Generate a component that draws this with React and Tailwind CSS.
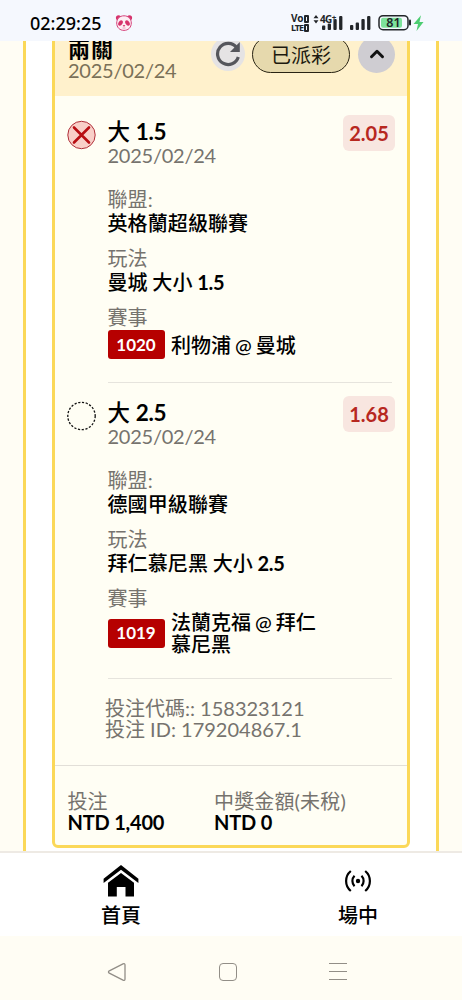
import { ChevronUp } from 'lucide-react';

const BETS = [
    {
        id: '1020',
        pick: '大 1.5',
        date: '2025/02/24',
        odds: '2.05',
        lost: true,
        league: '英格蘭超級聯賽',
        market: '曼城 大小 1.5',
        teams: '利物浦 @ 曼城',
    },
    {
        id: '1019',
        pick: '大 2.5',
        date: '2025/02/24',
        odds: '1.68',
        lost: false,
        league: '德國甲級聯賽',
        market: '拜仁慕尼黑 大小 2.5',
        teams: '法蘭克福 @ 拜仁慕尼黑',
    },
];

// Chinese stays medium, numbers go bold
const Mixed = ({ text }) =>
    text.split(/([\d.,]+)/).map((part, i) =>
        i % 2 ? <span key={i} className="font-bold tracking-[-0.3px]">{part}</span> : part
    );

const PandaIcon = () => (
    <svg width="18" height="18" viewBox="0 0 18 18" fill="none">
        <circle cx="3.5" cy="3.8" r="2.6" fill="#d6336c" />
        <circle cx="14.5" cy="3.8" r="2.6" fill="#d6336c" />
        <path d="M9 1.8c4.4 0 7.3 3 7.3 7.2 0 4.4-3 7.4-7.3 7.4S1.7 13.4 1.7 9C1.7 4.8 4.6 1.8 9 1.8Z" fill="#fdeef4" stroke="#d6447c" strokeWidth="1" />
        <ellipse cx="5.5" cy="9" rx="2" ry="2.9" transform="rotate(32 5.5 9)" fill="#d6336c" />
        <ellipse cx="12.5" cy="9" rx="2" ry="2.9" transform="rotate(-32 12.5 9)" fill="#d6336c" />
        <ellipse cx="9" cy="11.8" rx="1.2" ry=".8" fill="#d6336c" />
        <path d="M7.5 14h3" stroke="#e88aae" strokeWidth=".8" />
    </svg>
);

const SignalBars = ({ width, heights }) => (
    <svg width={width} height="16" viewBox={`0 0 ${width} 16`}>
        {heights.map((h, i) => (
            <rect key={i} x={i * 5.7} y={15 - h} width="3.3" height={h} rx="1" fill="#222529" />
        ))}
    </svg>
);

const StatusBar = () => (
    <div className="flex h-[41px] shrink-0 items-start bg-[#f5f8fe] font-['Noto_Sans','Liberation_Sans',sans-serif] text-black">
        <div className="ml-[30px] mt-[11px] w-[72px] whitespace-nowrap text-[18px] font-medium leading-6">02:29:25</div>
        <div className="ml-[13px] mt-[14px]"><PandaIcon /></div>
        <div className="ml-[158px] mt-[14px] flex w-[18px] flex-col text-[#222529]">
            <div className="flex items-center justify-between text-[10px] font-bold leading-[9px]">
                <span>Vo</span>
                <span className="h-[8px] w-[5px] rounded-[1px] border-2 border-[#222529]" />
            </div>
            <div className="flex items-center justify-between text-[9px] font-bold leading-[9px] tracking-[-1px]">
                <span>LTE</span>
                <span className="h-[8px] w-[5px] rounded-[1px] border-2 border-[#222529]" />
            </div>
        </div>
        <div className="ml-[4px] mt-[13px] flex items-start">
            <svg width="6" height="9" viewBox="0 0 6 9" className="mt-[2px]">
                <path d="M3 0 5.5 3.3H.5ZM3 8.5 .5 5.2h5Z" fill="#222529" />
            </svg>
            <div className="relative ml-[3px] mt-[2px]">
                <SignalBars width={21} heights={[4.5, 6.5, 11, 14]} />
                <div className="absolute -left-[2px] -top-[1px] text-[10px] font-bold leading-[10px] tracking-[-0.6px] text-[#222529] [text-shadow:0_0_1px_#f5f8fe]">
                    4G<span className="relative -top-[2px] text-[8px]">+</span>
                </div>
            </div>
        </div>
        <div className="ml-[7px] mt-[15px]"><SignalBars width={21} heights={[5, 7.5, 11, 14]} /></div>
        <svg width="50" height="19" viewBox="0 0 50 19" className="ml-[7px] mt-[14px]">
            <rect x="1" y="1.7" width="29" height="14" rx="4" fill="#f5f8fe" stroke="#222529" strokeWidth="1.5" />
            <rect x="3" y="3.7" width="21" height="10" rx="2" fill="#7de39b" />
            <path d="M32 6.5v4" stroke="#222529" strokeWidth="2" strokeLinecap="round" />
            <text x="15.5" y="13.2" textAnchor="middle" fontSize="12.5" fontWeight="600" fill="#222529">81</text>
            <path d="M43 1.2 35.5 10h4.5L38.5 17 45.5 8h-4Z" fill="#4ccd71" />
        </svg>
    </div>
);

const RefreshIcon = () => (
    <svg width="26" height="26" viewBox="0 0 26 26" fill="none" stroke="#55565c" strokeWidth="3.2">
        <path d="M21.6 6.5A10.6 10.6 0 1 0 23.3 16" />
        <path d="M15 11h9.8V1Z" fill="#55565c" stroke="none" />
    </svg>
);

const CardHeader = () => (
    <div className="flex h-[65px] items-start bg-[#fff1cc] pl-[13px]">
        <div className="mt-[6px] w-[143px]">
            <div className="text-[22px] font-bold leading-6 tracking-[1px] text-black">兩關</div>
            <div className="-mt-[2px] text-[20px] leading-[22px] tracking-[-0.25px] text-[#7a7058]">2025/02/24</div>
        </div>
        <div className="mt-[6px] flex h-[34px] w-[34px] items-center justify-center rounded-full bg-[#e5e3e4]">
            <RefreshIcon />
        </div>
        <div className="ml-[7px] mt-[5px] flex h-[37px] w-[98px] items-center justify-center rounded-full border-[1.5px] border-[#282313] bg-[#e6d9ad] text-[20px] leading-6 text-[#1c190f]">
            已派彩
        </div>
        <div className="ml-[8px] mt-[5px] flex h-[37px] w-[37px] items-center justify-center rounded-full bg-[#cfcdd2]">
            <ChevronUp size={22} strokeWidth={3.2} color="#111" className="-mt-[2px]" />
        </div>
    </div>
);

const ResultMark = ({ lost }) => (
    <svg width="30" height="30" viewBox="0 0 30 30" fill="none" className="-mt-[3px] shrink-0">
        {lost ? (
            <>
                <circle cx="15.5" cy="15" r="13.7" fill="#f9cfc8" stroke="#b0303a" strokeWidth="1" />
                <path d="m8 7.5 15 15m0-15-15 15" stroke="#b80d12" strokeWidth="2.6" strokeLinecap="round" />
            </>
        ) : (
            <circle cx="15.5" cy="15" r="13.7" stroke="#111" strokeWidth="1.3" strokeDasharray="2.2 1.6" />
        )}
    </svg>
);

const Field = ({ label, value }) => (
    <div className="mb-[11px]">
        <div className="tracking-[0.1px] text-[#76736e]">{label}</div>
        <div className="font-medium tracking-[0.1px] text-black [word-spacing:-0.5px]"><Mixed text={value} /></div>
    </div>
);

const BetItem = ({ bet }) => (
    <div className="flex pl-[11px] pr-[12px] text-[20px] leading-6">
        <div className="w-[41.5px] shrink-0"><ResultMark lost={bet.lost} /></div>
        <div className="flex-1">
            <div className="-mt-[3px] flex items-start justify-between">
                <div>
                    <div className="text-[22.5px] font-medium text-black"><Mixed text={bet.pick} /></div>
                    <div className="-mt-px tracking-[-0.25px] text-[#76736e]">{bet.date}</div>
                </div>
                <div className="-mt-[5px] flex h-9 w-[52px] items-center justify-center rounded-md bg-[#f8e6e0] font-bold text-[#b7281f]">
                    {bet.odds}
                </div>
            </div>
            <div className="mt-[20px]">
                <Field label="聯盟:" value={bet.league} />
                <Field label="玩法" value={bet.market} />
                <div className="text-[#76736e]">賽事</div>
                <div className="mt-px flex items-center">
                    <div className="flex h-[29px] w-[57px] shrink-0 items-center justify-center rounded-[3px] bg-[#b60000] text-[17px] font-bold text-white">
                        {bet.id}
                    </div>
                    <div className="ml-[6.5px] w-[152px] font-medium leading-[22px] text-black [word-spacing:-1px]">{bet.teams}</div>
                </div>
            </div>
            <div className="mr-[3px] mt-[23px] h-px bg-[#e6e4dd]" />
        </div>
    </div>
);

const Ticket = () => (
    <div className="mx-[26px] -mt-[13px] rounded-[6px] border-[3px] border-[#fbd858] bg-[#fffef4]">
        <CardHeader />
        <div className="flex flex-col gap-[21px] pt-[27px]">
            {BETS.map(bet => <BetItem key={bet.id} bet={bet} />)}
        </div>
        <div className="mb-[25px] ml-[50px] mt-[19px] text-[20px] leading-[21px] text-[#76736e]">
            <div>投注代碼:: 158323121</div>
            <div>投注 ID: 179204867.1</div>
        </div>
        <div className="h-px bg-[#e2dfd8]" />
        <div className="flex pb-[12px] pl-[12.5px] pt-[25px] text-[20px] leading-[21px]">
            <div className="w-[146.5px]">
                <div className="text-[#76736e]">投注</div>
                <div className="font-bold tracking-[-0.2px] text-black">NTD 1,400</div>
            </div>
            <div>
                <div className="tracking-[0.15px] text-[#76736e]">中獎金額(未稅)</div>
                <div className="font-bold tracking-[-0.2px] text-black">NTD 0</div>
            </div>
        </div>
    </div>
);

const HomeIcon = () => (
    <svg width="36" height="34" viewBox="0 0 36 34" fill="#000">
        <path d="M18 1 .6 14.8V19L18 5.8 35.4 19v-4.2Z" />
        <path d="M18 9 5 18.8v13.7h8.8V23h8.7v9.5H31V18.8Z" />
    </svg>
);

const LiveIcon = () => (
    <svg width="28" height="24" viewBox="0 0 28 24" fill="none" stroke="#000" strokeWidth="2.2">
        <circle cx="14" cy="12" r="2.2" fill="#000" stroke="none" />
        <path d="M10.5 6.8a7.5 7.5 0 0 0 0 10.4M17.5 6.8a7.5 7.5 0 0 1 0 10.4" />
        <path d="M6.8 2a13 13 0 0 0 0 20M21.2 2a13 13 0 0 1 0 20" />
    </svg>
);

const NavItem = ({ icon, label }) => (
    <div className="flex flex-col items-center">
        <div className="flex h-9 items-center">{icon}</div>
        <div className="mt-[4px] text-[20px] font-medium leading-6 text-black">{label}</div>
    </div>
);

export default function App() {
    return (
        <div className="flex h-[1000px] w-[462px] flex-col overflow-hidden bg-[#fffdf4] font-['Lato','Noto_Sans_CJK_TC',sans-serif]">
            <StatusBar />

            <div className="h-[810px] shrink-0 overflow-hidden px-[23px]">
                <div className="flow-root h-full border-x-[3px] border-[#fbd858] bg-white">
                    <Ticket />
                </div>
            </div>

            {/* bottom nav */}
            <div className="flex h-[85px] shrink-0 items-start justify-between border-t-2 border-[#eeeae4] bg-white pl-[101px] pr-[84px] pt-[10px]">
                <NavItem icon={<HomeIcon />} label="首頁" />
                <NavItem icon={<LiveIcon />} label="場中" />
            </div>

            {/* system buttons */}
            <div className="flex h-[64px] items-center gap-[92px] pl-[107px] pt-[7px]">
                <svg width="20" height="20" viewBox="0 0 20 20" fill="none" stroke="#928e87" strokeWidth="1.3">
                    <path d="M2.3 8.8 16 1.8q2-.8 2 1.2v14q0 2-2 1.2L2.3 11.2q-1.7-1.2 0-2.4Z" />
                </svg>
                <div className="h-[18px] w-[18px] rounded-[4px] border-[1.5px] border-[#928e87]" />
                <div className="flex w-[18px] flex-col gap-[7px]">
                    <div className="h-px bg-[#928e87]" />
                    <div className="h-px bg-[#928e87]" />
                    <div className="h-px bg-[#928e87]" />
                </div>
            </div>
        </div>
    );
}
